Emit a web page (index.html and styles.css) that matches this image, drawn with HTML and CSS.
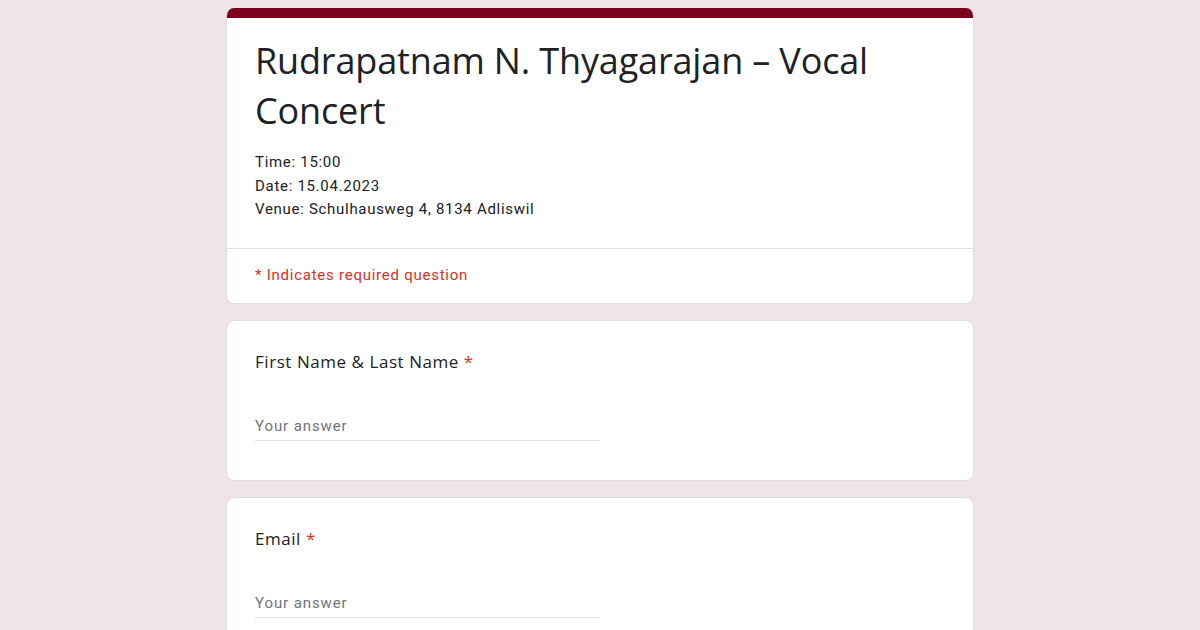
FILE: index.html
```html
<!DOCTYPE html>
<html lang="en">
<head>
<meta charset="utf-8">
<title>Rudrapatnam N. Thyagarajan – Vocal Concert</title>
<link rel="stylesheet" href="styles.css">
</head>
<body>
<main class="form">
  <section class="card header-card">
    <div class="accent"></div>
    <div class="header-body">
      <h1 class="title">Rudrapatnam N. Thyagarajan – Vocal Concert</h1>
      <div class="desc">
        <div>Time: 15:00</div>
        <div>Date: 15.04.2023</div>
        <div>Venue: Schulhausweg 4, 8134 Adliswil</div>
      </div>
    </div>
    <div class="required-note">* Indicates required question</div>
  </section>

  <section class="card question">
    <div class="q-title">First Name &amp; Last Name <span class="star">*</span></div>
    <div class="answer">Your answer</div>
  </section>

  <section class="card question">
    <div class="q-title">Email <span class="star">*</span></div>
    <div class="answer">Your answer</div>
  </section>
</main>
</body>
</html>
```

FILE: styles.css
```css
html, body {
  margin: 0;
  padding: 0;
  background: #f1e4e6;
}
body {
  font-family: Roboto, "Liberation Sans", sans-serif;
  color: #202124;
}
.form {
  width: 748px;
  margin: 0 auto;
  padding-top: 8px;
  display: flex;
  flex-direction: column;
  gap: 16px;
}
.card {
  background: #fff;
  border: 1px solid #dadce0;
  border-radius: 8px;
  overflow: hidden;
}
.header-card {
  border-top: none;
}
.accent {
  height: 10px;
  background: #7b0020;
}
.header-body {
  padding: 18px 28px 26px;
  border-bottom: 1px solid #dadce0;
}
.title {
  margin: 0;
  font-family: "Open Sans", Roboto, sans-serif;
  font-weight: 400;
  font-size: 36px;
  line-height: 50px;
  letter-spacing: -0.15px;
  color: #202124;
}
.desc {
  margin-top: 15px;
  font-size: 15px;
  line-height: 23.5px;
  letter-spacing: 0.7px;
  color: #202124;
}
.required-note {
  padding: 16px 28px 18px;
  font-size: 15px;
  line-height: 20px;
  letter-spacing: 0.75px;
  color: #d93025;
}
.question {
  padding: 29px 28px 39px;
}
.q-title {
  font-family: "Open Sans", Roboto, sans-serif;
  font-size: 17px;
  line-height: 24px;
  letter-spacing: 0.55px;
  color: #202124;
}
.star {
  color: #d93025;
}
.answer {
  margin-top: 42px;
  width: 345px;
  font-size: 15px;
  line-height: 20px;
  letter-spacing: 0.9px;
  color: #70757a;
  padding-bottom: 4px;
  border-bottom: 1px solid #e0e0e0;
}
```
